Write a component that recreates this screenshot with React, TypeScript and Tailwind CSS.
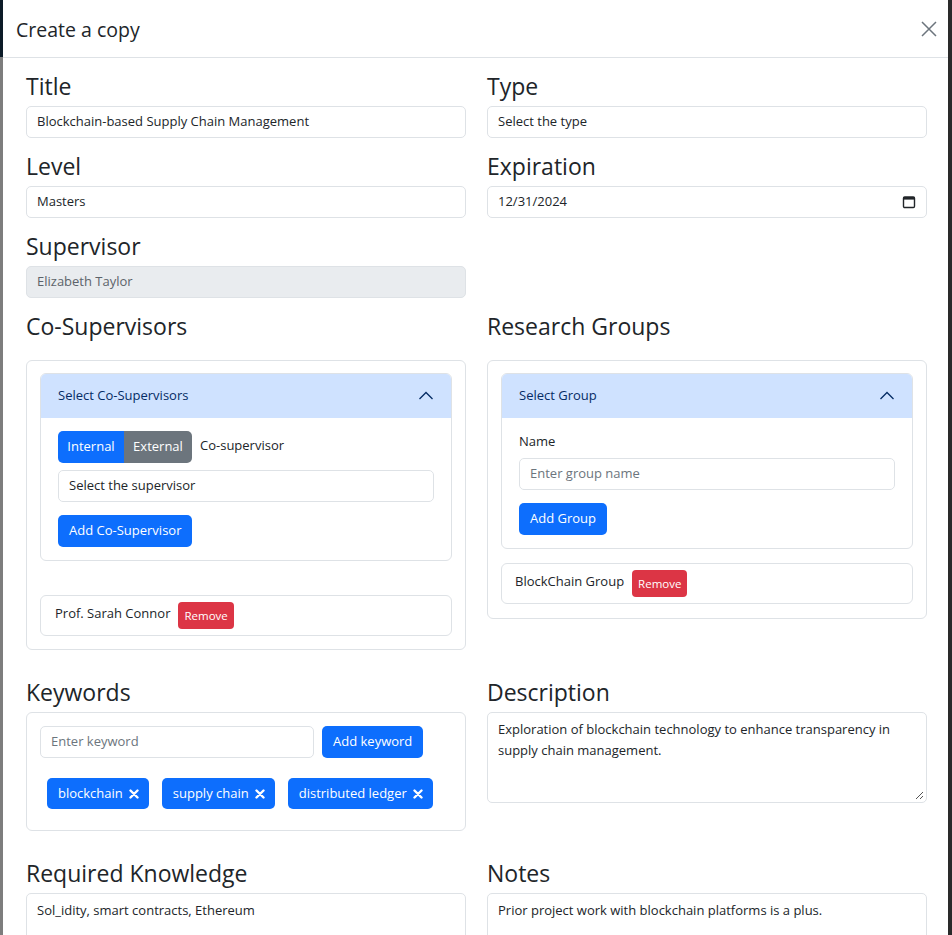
import React from "react";

const labelCls = "block text-[23px] font-medium leading-[29px] text-[#212529]";
const boxBase = "flex h-[32px] items-center rounded-[5px] border border-[#dee2e6] px-[10px] text-[13px]";
const inputCls = `${boxBase} bg-white text-[#212529]`;
const placeholderCls = `${boxBase} bg-white text-[#6c757d]`;
const disabledCls = `${boxBase} bg-[#e9ecef] text-[#5c636a]`;
const btnBlue = "flex h-[32px] items-center rounded-[5px] bg-[#0d6efd] px-[11px] text-[13px] text-white";

function Chevron() {
  return (
    <svg width="16" height="16" viewBox="0 0 16 16" fill="none">
      <path d="M1.5 11 L8 4.5 L14.5 11" stroke="#052c65" strokeWidth="1.3" />
    </svg>
  );
}

function Times() {
  return (
    <svg width="10" height="10" viewBox="0 0 10 10">
      <path d="M1.5 1.5 L8.5 8.5 M8.5 1.5 L1.5 8.5" stroke="white" strokeWidth="2.4" strokeLinecap="round" />
    </svg>
  );
}

function Field({ label, children }: { label: string; children: React.ReactNode }) {
  return (
    <div>
      <div className={`${labelCls} mb-[5px]`}>{label}</div>
      {children}
    </div>
  );
}

function RemoveBtn() {
  return (
    <span className="flex h-[27px] items-center rounded-[4px] bg-[#dc3545] px-[6px] text-[11.5px] text-white">
      Remove
    </span>
  );
}

function Tag({ text }: { text: string }) {
  return (
    <span className="flex h-[31px] items-center gap-[6px] rounded-[5px] bg-[#0d6efd] pl-[11px] pr-[10px] text-[13px] font-medium text-white">
      {text}
      <Times />
    </span>
  );
}

export default function App() {
  return (
    <div className="flex h-[935px] w-[952px] overflow-hidden font-['Open_Sans',sans-serif]">
      <div className="flex w-[3px] flex-col">
        <div className="h-[57px] bg-[#0c1b28]" />
        <div className="flex-1 bg-[#7d7d7d]" />
      </div>

      <div className="flex w-[945px] flex-col rounded-t-[6px] bg-white">
        <div className="flex h-[58px] shrink-0 items-center justify-between border-b border-[#dee2e6] pl-[13px] pr-[11px]">
          <h5 className="mt-[2px] text-[19.5px] font-medium text-[#212529]">Create a copy</h5>
          <svg width="16" height="16" viewBox="0 0 16 16">
            <path d="M1 1 L15 15 M15 1 L1 15" stroke="#6c757d" strokeWidth="1.5" />
          </svg>
        </div>

        <div className="flex flex-col pl-[23px] pr-[21px] pt-[14px]">
          <div className="grid grid-cols-2 gap-x-[21px] gap-y-[14px]">
            <Field label="Title">
              <div className={inputCls}>Blockchain-based Supply Chain Management</div>
            </Field>
            <Field label="Type">
              <div className={inputCls}>Select the type</div>
            </Field>
            <Field label="Level">
              <div className={inputCls}>Masters</div>
            </Field>
            <Field label="Expiration">
              <div className={`${inputCls} justify-between`}>
                <span>12/31/2024</span>
                <svg width="14" height="14" viewBox="0 0 14 14" fill="none">
                  <rect x="1.5" y="2" width="11" height="10.5" rx="1.2" stroke="#212529" strokeWidth="1.4" />
                  <rect x="1.5" y="2" width="11" height="2.6" fill="#212529" />
                </svg>
              </div>
            </Field>
            <Field label="Supervisor">
              <div className={disabledCls}>Elizabeth Taylor</div>
            </Field>
            <div />

            <div>
              <div className={`${labelCls} mb-[19px]`}>Co-Supervisors</div>
              <div className="rounded-[6px] border border-[#dee2e6] px-[13px] pb-[13px] pt-[12px]">
                <div className="overflow-hidden rounded-[6px] border border-[#dee2e6]">
                  <div className="flex h-[44px] items-center justify-between bg-[#cfe2ff] px-[17px] text-[13px] text-[#052c65]">
                    <span>Select Co-Supervisors</span>
                    <Chevron />
                  </div>
                  <div className="px-[17px] pb-[13px] pt-[13px]">
                    <div className="flex items-start">
                      <div className="flex h-[32px] text-[13px] text-white">
                        <span className="flex w-[66px] items-center justify-center rounded-l-[5px] bg-[#0d6efd]">Internal</span>
                        <span className="flex w-[68px] items-center justify-center rounded-r-[5px] bg-[#6c757d]">External</span>
                      </div>
                      <span className="ml-[8px] pt-[5px] text-[13px] text-[#212529]">Co-supervisor</span>
                    </div>
                    <div className={`${inputCls} mt-[7px]`}>Select the supervisor</div>
                    <div className="mt-[13px] flex">
                      <span className={btnBlue}>Add Co-Supervisor</span>
                    </div>
                  </div>
                </div>
                <div className="mt-[34px] flex h-[41px] items-center gap-[8px] rounded-[6px] border border-[#dee2e6] px-[14px] text-[13px] text-[#212529]">
                  <span className="-mt-[4px]">Prof. Sarah Connor</span>
                  <RemoveBtn />
                </div>
              </div>
            </div>

            <div className="self-start">
              <div className={`${labelCls} mb-[19px]`}>Research Groups</div>
              <div className="rounded-[6px] border border-[#dee2e6] px-[13px] pb-[14px] pt-[12px]">
                <div className="overflow-hidden rounded-[6px] border border-[#dee2e6]">
                  <div className="flex h-[44px] items-center justify-between bg-[#cfe2ff] px-[17px] text-[13px] text-[#052c65]">
                    <span>Select Group</span>
                    <Chevron />
                  </div>
                  <div className="px-[17px] pb-[13px] pt-[13px]">
                    <div className="mb-[7px] text-[13px] leading-[20px] text-[#212529]">Name</div>
                    <div className={placeholderCls}>Enter group name</div>
                    <div className="mt-[13px] flex">
                      <span className={btnBlue}>Add Group</span>
                    </div>
                  </div>
                </div>
                <div className="mt-[14px] flex h-[41px] items-center gap-[8px] rounded-[6px] border border-[#dee2e6] px-[13px] text-[13px] text-[#212529]">
                  <span className="-mt-[4px]">BlockChain Group</span>
                  <RemoveBtn />
                </div>
              </div>
            </div>
          </div>

          <div className="mt-[28px] grid grid-cols-2 gap-x-[21px]">
            <Field label="Keywords">
              <div className="rounded-[6px] border border-[#dee2e6] px-[13px] pb-[21px] pt-[13px]">
                <div className="flex gap-[8px]">
                  <div className={`${placeholderCls} h-[31px] w-[274px]`}>Enter keyword</div>
                  <span className={`${btnBlue} h-[31px] font-medium`}>Add keyword</span>
                </div>
                <div className="mt-[20px] flex gap-[13px] pl-[7px]">
                  <Tag text="blockchain" />
                  <Tag text="supply chain" />
                  <Tag text="distributed ledger" />
                </div>
              </div>
            </Field>
            <Field label="Description">
              <div className="relative h-[91px] rounded-[5px] border border-[#dee2e6] px-[10px] pt-[6px] text-[13px] leading-[21px] text-[#212529]">
                Exploration of blockchain technology to enhance transparency in
                <br />
                supply chain management.
                <svg className="absolute bottom-[2px] right-[2px]" width="9" height="9" viewBox="0 0 9 9">
                  <path d="M1 8 L8 1 M5 8 L8 5" stroke="#555" strokeWidth="1" />
                </svg>
              </div>
            </Field>
          </div>

          <div className="mt-[28px] grid grid-cols-2 gap-x-[21px]">
            <div>
              <div className={`${labelCls} mb-[5px]`}>Required Knowledge</div>
              <div className="h-[91px] rounded-t-[5px] border border-[#dee2e6] px-[10px] pt-[6px] text-[13px] leading-[21px] text-[#212529]">
                Sol_idity, smart contracts, Ethereum
              </div>
            </div>
            <div>
              <div className={`${labelCls} mb-[5px]`}>Notes</div>
              <div className="h-[91px] rounded-t-[5px] border border-[#dee2e6] px-[10px] pt-[6px] text-[13px] leading-[21px] text-[#212529]">
                Prior project work with blockchain platforms is a plus.
              </div>
            </div>
          </div>
        </div>
      </div>

      <div className="w-[4px] bg-[#2a2a2a]" />
    </div>
  );
}
